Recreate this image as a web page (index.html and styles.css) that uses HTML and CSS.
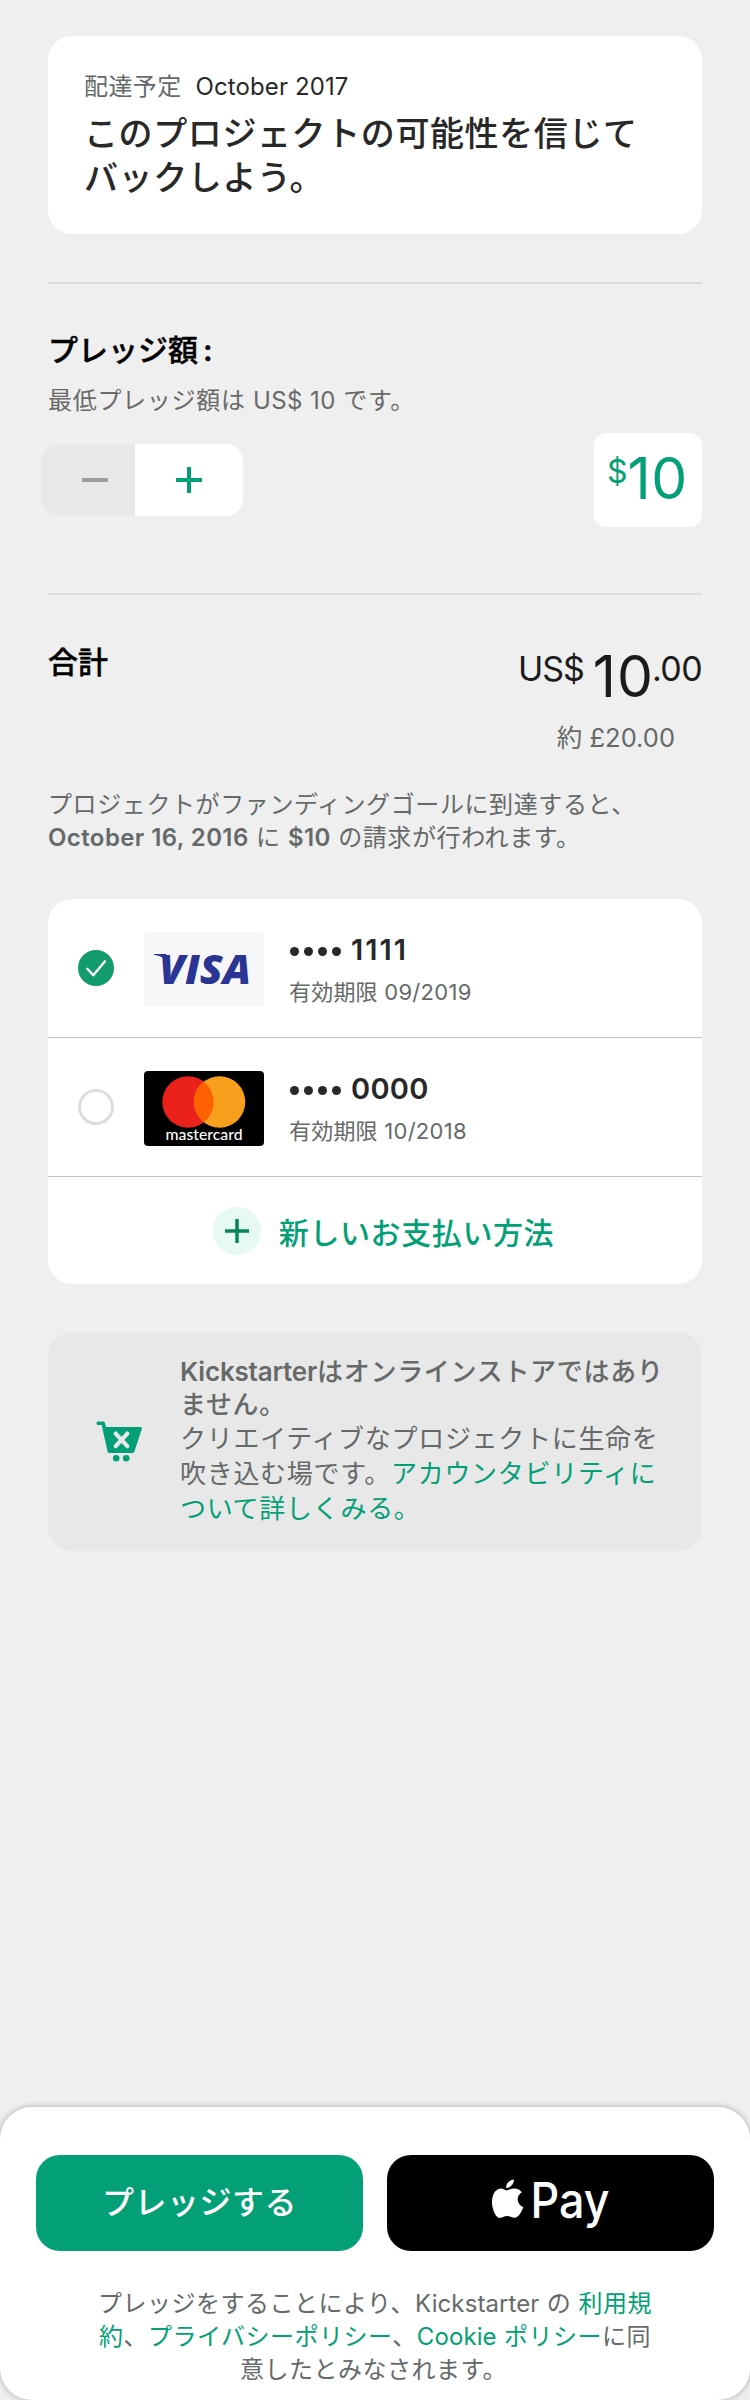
FILE: index.html
```html
<!DOCTYPE html>
<html lang="ja">
<head>
<meta charset="utf-8">
<title>Pledge</title>
<link rel="stylesheet" href="styles.css">
</head>
<body>
<div class="screen">
  <main class="content">
    <section class="card reward">
      <p class="delivery"><span class="muted">配達予定</span><span class="date">October 2017</span></p>
      <h1 class="reward-title">このプロジェクトの可能性を信じて<br>バックしよう。</h1>
    </section>

    <section class="pledge">
      <h2 class="heading">プレッジ額<span class="colon">:</span></h2>
      <p class="minimum">最低プレッジ額は <span class="lat">US$ 10</span> です。</p>
      <div class="pledge-row">
        <div class="stepper">
          <button class="step minus" aria-label="-"><svg width="28" height="28" viewBox="0 0 28 28"><path d="M1 14h26" stroke="#9b9e9e" stroke-width="4"/></svg></button>
          <button class="step plus" aria-label="+"><svg width="28" height="28" viewBox="0 0 28 28"><path d="M1 14h26M14 1v26" stroke="#03a077" stroke-width="4"/></svg></button>
        </div>
        <div class="amount"><span class="cur">$</span><span class="num">10</span></div>
      </div>
    </section>

    <section class="total">
      <h2 class="heading">合計</h2>
      <div class="total-value">
        <div class="sum"><span class="sum-cur">US$</span><span class="sum-num">10</span><span class="sum-dec">.00</span></div>
        <div class="approx">約 <span class="approx-num">£20.00</span></div>
      </div>
    </section>
    <p class="charge">プロジェクトがファンディングゴールに到達すると、<br><b>October 16, 2016</b> に <b>$10</b> の請求が行われます。</p>

    <section class="methods">
      <div class="method">
        <svg class="radio" width="36" height="36" viewBox="0 0 36 36"><circle cx="18" cy="18" r="18" fill="#129b6b"/><path d="M9.300 18.800l6 6.500L27 11.300" fill="none" stroke="#fff" stroke-width="2.300" stroke-linecap="round" stroke-linejoin="round"/></svg>
        <svg class="brand" width="120" height="74" viewBox="0 0 120 74"><rect width="120" height="74" rx="4" fill="#f7f7fa"/><path d="M10 22h12l3 8c-3-3.500-9-6.500-15-7.300z" fill="#2a3593"/><text x="15" y="51.500" textLength="92" lengthAdjust="spacingAndGlyphs" class="visa">VISA</text></svg>
        <div class="info"><p class="number"><span class="dots"><i></i><i></i><i></i><i></i></span><span class="ones">1111</span></p><p class="expiry">有効期限 <span>09/2019</span></p></div>
      </div>
      <div class="method">
        <svg class="radio" width="36" height="36" viewBox="0 0 36 36"><circle cx="18" cy="18" r="16.500" fill="none" stroke="#dcdedd" stroke-width="3"/></svg>
        <svg class="brand" width="120" height="75" viewBox="0 0 120 75"><rect width="120" height="75" rx="4"/><circle cx="44" cy="31" r="25.700" fill="#eb211c"/><circle cx="75.600" cy="31" r="25.700" fill="#f8a01d"/><path d="M59.800 10.700a25.700 25.700 0 0 1 0 40.600a25.700 25.700 0 0 1 0-40.600z" fill="#ff6000"/><text x="21.500" y="69" textLength="77" lengthAdjust="spacingAndGlyphs" class="mc">mastercard</text></svg>
        <div class="info"><p class="number"><span class="dots"><i></i><i></i><i></i><i></i></span><span class="zeros">0000</span></p><p class="expiry">有効期限 <span>10/2018</span></p></div>
      </div>
      <div class="add">
        <svg width="48" height="48" viewBox="0 0 48 48"><circle cx="24" cy="24" r="24" fill="#e6faf1"/><path d="M12 24h24M24 12v24" stroke="#07865c" stroke-width="3.500"/></svg>
        <span>新しいお支払い方法</span>
      </div>
    </section>

    <section class="notice">
      <svg class="cart" width="48" height="42" viewBox="0 0 48 42"><path d="M2.200 2.300h4.900l1.600 6" fill="none" stroke="#03a077" stroke-width="3.600" stroke-linecap="round" stroke-linejoin="round"/><path d="M8 6h36.500q1.900 0 1.400 1.800l-7.500 22.700q-.5 1.500-2 1.500H13.500q-1.500 0-1.900-1.500L6.500 8z" fill="#03a077"/><path d="M19.700 12.600l11.600 12.600M31.300 12.600L19.700 25.200" stroke="#e8e8e8" stroke-width="4.200" stroke-linecap="round"/><circle cx="20.200" cy="37.200" r="3.300" fill="#03a077"/><circle cx="30.200" cy="37.200" r="3.300" fill="#03a077"/></svg>
      <div class="notice-text">
        <p class="strong"><span class="ks">Kickstarter</span>はオンラインストアではあり<br>ません。</p>
        <p class="body">クリエイティブなプロジェクトに生命を<br>吹き込む場です。<a>アカウンタビリティに<br>ついて詳しくみる。</a></p>
      </div>
    </section>
  </main>

  <footer class="footer">
    <div class="buttons">
      <button class="btn green">プレッジする</button>
      <button class="btn black" aria-label="Apple Pay">
        <svg width="126" height="60" viewBox="0 0 126 60"><path d="M25.800 1.500c.5 3.600-3.100 8.500-7.600 8.500c-.6-4 3.300-8.200 7.600-8.500zM18.300 12.400c2 0 4.300-2.200 8.200-2c3.200.2 5.700 1.500 7.300 3.900c-6.200 3.700-5.200 12.300 1.500 14.900c-1.400 3.900-4.700 10.300-8.500 10.600c-3 .1-4.200-1.800-7.600-1.800s-4.700 1.800-7.500 1.900C7.600 40.100 4 30.700 4 24.500c0-9.800 4.700-13.900 9-14c2.600 0 4.100 1.900 5.300 1.900z" fill="#fff"/><text x="42.500" y="39.500" textLength="79" lengthAdjust="spacingAndGlyphs" class="pay">Pay</text></svg>
      </button>
    </div>
    <p class="legal">プレッジをすることにより、<span class="ks2">Kickstarter</span> の <a>利用規<br>約</a>、<a>プライバシーポリシー</a>、<a><span class="ks2">Cookie</span> ポリシー</a>に同<br><span class="last">意したとみなされます。</span></p>
  </footer>
</div>
</body>
</html>
```
FILE: styles.css
```css
* { box-sizing: border-box; }
body, h1, h2, p { margin: 0; }
body { background: #efefef; font-family: Inter, "Noto Sans CJK JP", sans-serif; color: #282828; }
button { border: 0; padding: 0; font: inherit; }
.screen { width: 750px; height: 2400px; display: flex; flex-direction: column; justify-content: space-between; }
.content { padding: 36px 48px 0; }
.card { background: #fff; border-radius: 24px; height: 198px; padding: 34px 36px 0; }
.delivery { font-size: 24px; line-height: 34px; display: flex; gap: 14px; white-space: nowrap; }
.muted { color: #656969; letter-spacing: .4px; }
.date { letter-spacing: .1px; }
.reward-title { font-size: 34px; line-height: 44px; font-weight: 500; letter-spacing: .6px; padding-top: 8px; white-space: nowrap; }

.pledge { border-top: 2px solid #dcdcdc; margin-top: 48px; padding-top: 46px; height: 311px; }
.heading { color: #000; font-size: 30px; line-height: 40px; font-weight: 500; -webkit-text-stroke: .4px #000; white-space: nowrap; }
.colon { margin-left: 5px; font-weight: 600; }
.minimum { color: #696969; font-size: 24px; line-height: 34px; letter-spacing: .7px; margin-top: 14px; white-space: nowrap; }
.lat { letter-spacing: .4px; }
.pledge-row { display: flex; justify-content: space-between; align-items: center; margin: 15px 0 0 -7px; }
.stepper { display: flex; width: 202px; height: 72px; border-radius: 18px; overflow: hidden; }
.step { display: flex; align-items: center; }
.minus { width: 94px; background: #e8e8e8; padding-left: 40px; }
.plus { width: 108px; background: #fff; padding-left: 40px; }
.amount { width: 108px; height: 94px; border-radius: 12px; background: #fff; color: #03a077; display: flex; padding: 11px 0 0 13px; }
.cur { font-size: 32px; line-height: 54px; margin-top: 1px; }
.num { font-size: 57px; line-height: 68px; letter-spacing: .5px; margin: 1px 0 0 0; }

.total { border-top: 2px solid #dcdcdc; padding-top: 47px; display: flex; justify-content: space-between; height: 188px; }
.total-value { display: flex; flex-direction: column; align-items: flex-end; white-space: nowrap; }
.sum { display: flex; color: #1b1b1b; height: 68px; }
.sum-cur, .sum-dec { font-size: 34px; line-height: 54px; letter-spacing: -1px; }
.sum-dec { letter-spacing: -.6px; }
.sum-num { font-size: 57px; line-height: 68px; letter-spacing: 1px; margin: 1px -2px 0 9px; }
.approx { color: #656969; font-size: 25.5px; line-height: 36px; margin: 10px 27px 0 0; }
.charge { color: #656969; font-size: 24px; line-height: 33px; letter-spacing: .6px; white-space: nowrap; margin-top: 7px; }
.charge b { font-weight: 600; letter-spacing: .4px; }

.methods { background: #fff; border-radius: 24px; height: 385px; margin-top: 45px; }
.method { display: flex; height: 139px; padding: 33px 0 0 30px; border-bottom: 1px solid #c3c5c5; }
.radio { margin: 18px 30px 0 0; flex: none; }
.brand { flex: none; }
.visa { font: italic 800 41px "Open Sans", sans-serif; fill: #2a3593; }
.mc { font: 500 16px Lato, sans-serif; fill: #fff; }
.info { margin-left: 25px; white-space: nowrap; }
.number { font-size: 29px; line-height: 36px; font-weight: 600; display: flex; align-items: center; }
.ones { letter-spacing: 2px; }
.zeros { letter-spacing: .3px; }
.dots { display: flex; gap: 5px; margin-right: 10px; padding: 2px 0 0 1px; }
.dots i { width: 9px; height: 9px; border-radius: 50%; background: #282828; }
.expiry { color: #656969; font-size: 22px; line-height: 32px; margin-top: 8px; letter-spacing: .2px; }
.expiry span { letter-spacing: .3px; }
.add { display: flex; align-items: center; justify-content: center; gap: 18px; height: 107px; padding-left: 17px; color: #03a077; font-size: 30px; font-weight: 500; letter-spacing: .6px; }

.notice { background: #e8e8e8; border-radius: 24px; margin-top: 48px; height: 219px; padding: 23px 0 0 48px; display: flex; color: #656969; font-size: 26px; letter-spacing: .7px; }
.cart { margin: 66px 36px 0 0; flex: none; }
.notice-text { white-space: nowrap; }
.strong { font-weight: 500; line-height: 33px; }
.ks { font-weight: 600; letter-spacing: -.2px; }
.body { line-height: 35px; }
a { color: #03a077; }

.footer { background: #fff; border-radius: 32px; height: 293px; padding: 48px 36px 0; box-shadow: 0 0 6px rgba(0,0,0,.3); }
.buttons { display: flex; gap: 24px; }
.btn { flex: 1; height: 96px; border-radius: 24px; color: #fff; display: flex; justify-content: center; }
.green { background: #03a077; font-size: 32px; font-weight: 500; letter-spacing: .5px; line-height: 96px; }
.black { background: #000; padding-top: 23px; }
.black svg { overflow: visible; }
.pay { font: 500 49px Inter, sans-serif; fill: #fff; }
.legal { color: #656969; font-size: 24px; line-height: 33px; letter-spacing: .5px; text-align: center; margin-top: 36px; white-space: nowrap; }
.ks2 { letter-spacing: .1px; }
.last { margin-right: 3px; }
```
